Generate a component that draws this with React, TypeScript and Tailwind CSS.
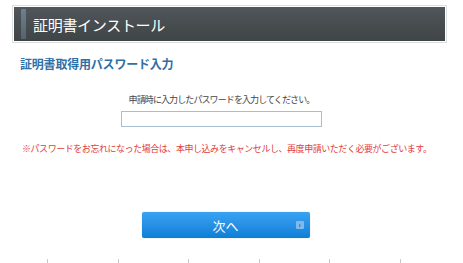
const jp = '"Noto Sans CJK JP", "Liberation Sans", sans-serif';

export default function App() {
  const ticks = [0, 1, 2, 3, 4, 5];
  return (
    <div className="w-[463px] h-[263px] bg-white overflow-hidden flex flex-col" style={{ fontFamily: jp }}>
      {/* ヘッダー */}
      <div className="mx-[12px] mt-[5px] w-[435px] h-[38px] border border-[#dcdedf] p-[1px]">
        <div className="h-full bg-gradient-to-b from-[#50565a] to-[#3f4446] flex items-center pl-[7px]">
          <div className="w-[5px] h-[30px] rounded-[1px] bg-gradient-to-b from-[#6f7f8c] to-[#56636d]" />
          <h1 className="ml-[7px] text-[15px] leading-none text-white tracking-[-0.3px]">証明書インストール</h1>
        </div>
      </div>

      {/* 見出し */}
      <h2 className="ml-[20px] mt-[15px] text-[12px] leading-none font-bold text-[#2f6fa6] tracking-[-0.2px]">証明書取得用パスワード入力</h2>

      {/* 入力欄 */}
      <div className="mt-[25px] pr-[20px] flex flex-col items-center">
        <p className="text-[9px] leading-none text-[#444] tracking-[-0.9px]">申請時に入力したパスワードを入力してください。</p>
        <input
          type="password"
          className="mt-[7px] w-[201px] h-[16px] border border-[#a9bdd3] bg-white outline-none"
        />
      </div>

      {/* 注意 */}
      <p className="ml-[22px] mt-[17px] text-[9px] leading-none text-[#e0403c] tracking-[-0.45px]">
        ※パスワードをお忘れになった場合は、本申し込みをキャンセルし、再度申請いただく必要がございます。
      </p>

      {/* ボタン */}
      <div className="mt-[59px] pr-[12px] flex justify-center">
        <button className="relative w-[168px] h-[26px] rounded-[2px] bg-gradient-to-b from-[#3aa2f2] to-[#0a7fd6] shadow-[0_0_1px_rgba(0,80,160,0.5)] flex items-center justify-center">
          <span className="text-white text-[13px] leading-none">次へ</span>
          <span className="absolute right-[6px] top-[9px] w-[8px] h-[8px] rounded-[1px] bg-[#7dbbed] flex items-center justify-center">
            <svg width="4" height="5" viewBox="0 0 4 5">
              <path d="M1 0.5 L3.2 2.5 L1 4.5 Z" fill="#3a8ed8" />
            </svg>
          </span>
        </button>
      </div>

      {/* 下部目盛り */}
      <div className="mt-auto h-[4px] flex pl-[47px] gap-[69.6px]">
        {ticks.map((t) => (
          <div key={t} className="w-[1px] h-[4px] bg-[#c8c8c8]" />
        ))}
      </div>
    </div>
  );
}
